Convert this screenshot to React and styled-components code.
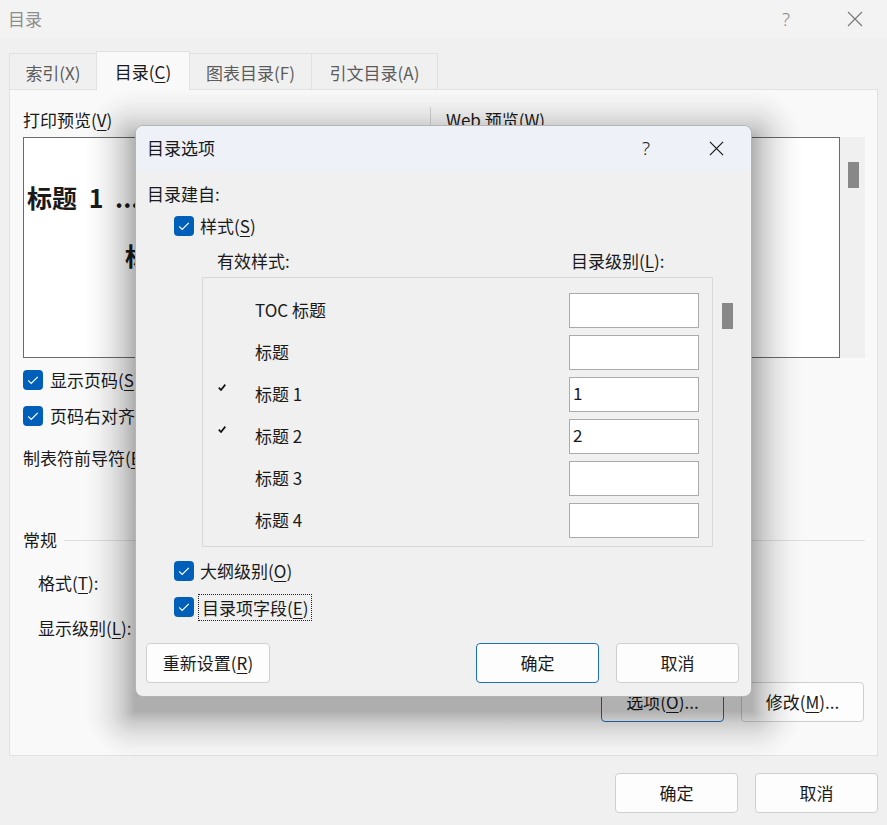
import React from "react";
import styled, { createGlobalStyle } from "styled-components";

const GlobalStyle = createGlobalStyle`
  html, body { margin: 0; padding: 0; }
  body {
    font-family: "Noto Sans CJK SC", "Microsoft YaHei", "Noto Sans", sans-serif;
    font-size: 17px;
    color: #1a1a1a;
    background: #f0f0f0;
  }
  * { box-sizing: border-box; }
`;

const Window = styled.div`
  position: relative;
  width: 887px;
  height: 825px;
  overflow: hidden;
  background: #f0f0f0;
  display: flex;
  flex-direction: column;
`;

const TitleBar = styled.div`
  flex: none;
  display: flex;
  align-items: center;
  background: ${(p) => p.$bg || "#f3f3f3"};
  padding-left: ${(p) => p.$pad || 8}px;
  height: ${(p) => p.$h || 38}px;
`;

const TitleText = styled.span`
  line-height: 24px;
  color: ${(p) => p.$color || "#1a1a1a"};
`;

const Captions = styled.div`
  margin-left: auto;
  display: flex;
  height: 100%;
`;

const CaptionBtn = styled.div`
  width: ${(p) => p.$w}px;
  height: 100%;
  display: flex;
  align-items: center;
  justify-content: center;
  color: ${(p) => p.$color};
  font-family: "Noto Sans", "DejaVu Sans", sans-serif;
  font-size: 19px;
  font-weight: 300;
`;

const Body = styled.div`
  flex: 1;
  display: flex;
  flex-direction: column;
  padding: 13px 9px 0;
`;

const TabStrip = styled.div`
  height: 38px;
  display: flex;
  align-items: flex-end;
`;

const Tab = styled.div`
  position: relative;
  width: ${(p) => p.$w}px;
  height: ${(p) => (p.$active ? 39 : 36)}px;
  margin-bottom: ${(p) => (p.$active ? -1 : 0)}px;
  margin-left: ${(p) => (p.$first ? 0 : -1)}px;
  z-index: ${(p) => (p.$active ? 2 : 1)};
  display: flex;
  align-items: center;
  justify-content: center;
  padding-top: ${(p) => (p.$active ? 1 : 3)}px;
  border: 1px solid #e1e1e1;
  border-bottom: none;
  background: ${(p) => (p.$active ? "#f9f9f9" : "#f0f0f0")};
  color: ${(p) => (p.$active ? "#1a1a1a" : "#5c5c5c")};
  line-height: 24px;
`;

const Pane = styled.div`
  height: 667px;
  flex: none;
  border: 1px solid #e1e1e1;
  background: #f9f9f9;
  padding: 18px 12px 0 13px;
  display: flex;
  flex-direction: column;
`;

const Key = styled.span`
  text-decoration: underline;
  text-underline-offset: 3px;
  text-decoration-thickness: 1px;
`;

const Line = styled.div`
  height: 24px;
  line-height: 24px;
  display: flex;
  align-items: center;
  margin-top: ${(p) => p.$mt || 0}px;
  margin-left: ${(p) => p.$ml || 0}px;
  gap: ${(p) => (p.$gap == null ? 7 : p.$gap)}px;
  white-space: nowrap;
`;

const PreviewRow = styled.div`
  display: flex;
  height: 250px;
`;

const PreviewGroup = styled.div`
  display: flex;
  flex-direction: column;
  width: ${(p) => (p.$w ? p.$w + "px" : "auto")};
  flex: ${(p) => (p.$w ? "none" : 1)};
`;

const PreviewLabel = styled.div`
  height: 24px;
  line-height: 24px;
  margin-bottom: 5px;
  white-space: nowrap;
`;

const PrintBox = styled.div`
  height: 221px;
  background: #fff;
  border: 1px solid #6b6b6b;
  overflow: hidden;
  padding: 44px 0 0 3px;
  font-weight: bold;
  font-size: 25px;
`;

const PreviewHeading = styled.div`
  line-height: 30px;
  white-space: nowrap;
  margin-left: ${(p) => p.$indent || 0}px;
  margin-top: ${(p) => p.$mt || 0}px;
  word-spacing: 6px;
`;

const Separator = styled.div`
  width: 1px;
  height: 252px;
  margin: -1px 15px 0 16px;
  background: #d6d6d6;
`;

const WebBoxRow = styled.div`
  display: flex;
  height: 221px;
`;

const WebBox = styled.div`
  flex: 1;
  background: #fff;
  border: 1px solid #6b6b6b;
`;

const ScrollTrack = styled.div`
  width: ${(p) => p.$w}px;
  background: ${(p) => p.$bg || "transparent"};
  padding: ${(p) => p.$top}px 0 0 ${(p) => p.$left}px;
`;

const Thumb = styled.div`
  width: 11px;
  height: 26px;
  background: #888;
`;

const GroupHeader = styled.div`
  display: flex;
  align-items: center;
  height: 24px;
  line-height: 24px;
  margin-top: ${(p) => p.$mt}px;
  gap: 7px;
  &::after {
    content: "";
    flex: 1;
    height: 1px;
    background: #dedede;
  }
`;

const ButtonRow = styled.div`
  display: flex;
  justify-content: ${(p) => p.$justify || "flex-end"};
  gap: 17px;
  margin-top: ${(p) => p.$mt || 0}px;
  margin-right: ${(p) => p.$mr || 0}px;
  margin-left: ${(p) => p.$ml || 0}px;
`;

const Spacer = styled.div`
  flex: 1;
`;

const Button = styled.div`
  width: ${(p) => p.$w || 123}px;
  height: 40px;
  display: flex;
  align-items: center;
  justify-content: center;
  background: #fdfdfd;
  border: 1px solid ${(p) => (p.$primary ? "#1f6fc0" : "#cfcfcf")};
  border-radius: 4px;
  line-height: 24px;
  white-space: nowrap;
`;

const BoxCheck = styled.span`
  width: 20px;
  height: 20px;
  flex: none;
  border-radius: 4px;
  background: #005fb8;
  display: flex;
  align-items: center;
  justify-content: center;
`;

/* ---- soft drop shadow drawn with gradients behind the modal ---- */
const S = 50; // shadow spread
const A = 0.3; // strength at the dialog edge
const ramp = () =>
  `rgba(0,0,0,${A}) 0%, rgba(0,0,0,${(A * 0.62).toFixed(3)}) 22%, rgba(0,0,0,${(A * 0.3).toFixed(3)}) 48%, rgba(0,0,0,${(A * 0.1).toFixed(3)}) 74%, rgba(0,0,0,0) 100%`;

const DialogShadow = styled.div`
  position: absolute;
  left: ${135 - S}px;
  top: ${125 - S + 14}px;
  width: ${617 + 2 * S}px;
  height: ${572 + 2 * S}px;
  z-index: 9;
  pointer-events: none;
  background:
    linear-gradient(to left, ${ramp()}) 0 ${S}px / ${S}px calc(100% - ${2 * S}px) no-repeat,
    linear-gradient(to right, ${ramp()}) 100% ${S}px / ${S}px calc(100% - ${2 * S}px) no-repeat,
    linear-gradient(to top, ${ramp()}) ${S}px 0 / calc(100% - ${2 * S}px) ${S}px no-repeat,
    linear-gradient(to bottom, ${ramp()}) ${S}px 100% / calc(100% - ${2 * S}px) ${S}px no-repeat,
    radial-gradient(circle ${S}px at 100% 100%, ${ramp()}) 0 0 / ${S}px ${S}px no-repeat,
    radial-gradient(circle ${S}px at 0 100%, ${ramp()}) 100% 0 / ${S}px ${S}px no-repeat,
    radial-gradient(circle ${S}px at 100% 0, ${ramp()}) 0 100% / ${S}px ${S}px no-repeat,
    radial-gradient(circle ${S}px at 0 0, ${ramp()}) 100% 100% / ${S}px ${S}px no-repeat,
    linear-gradient(rgba(0,0,0,${A}), rgba(0,0,0,${A})) ${S}px ${S}px / calc(100% - ${2 * S}px) calc(100% - ${2 * S}px) no-repeat;
`;

const Dialog = styled.div`
  position: absolute;
  left: 135px;
  top: 125px;
  width: 617px;
  height: 572px;
  z-index: 10;
  border: 1px solid #b4b4b4;
  border-radius: 8px;
  background: #f0f0f0;
  overflow: hidden;
  display: flex;
  flex-direction: column;
`;

const DialogBody = styled.div`
  display: flex;
  flex-direction: column;
  padding: 12px 12px 0 11px;
`;

const ListHeader = styled.div`
  display: grid;
  grid-template-columns: 354px 1fr;
  margin-top: 11px;
  padding-left: 70px;
  height: 24px;
  line-height: 24px;
`;

const ListWrap = styled.div`
  display: flex;
  margin-top: 4px;
  margin-left: 55px;
`;

const ListBox = styled.div`
  width: 512px;
  height: 270px;
  border: 1px solid #d9d9d9;
  padding-top: 11px;
  display: flex;
  flex-direction: column;
  overflow: hidden;
`;

const StyleRow = styled.div`
  height: 42px;
  flex: none;
  display: grid;
  grid-template-columns: 52px 1fr 130px;
  align-items: center;
  padding-right: 13px;
`;

const TickCell = styled.div`
  align-self: start;
  margin: 11px 0 0 15px;
  height: 7px;
  display: flex;
`;

const StyleName = styled.div`
  line-height: 24px;
  white-space: nowrap;
`;

const LevelInput = styled.div`
  height: 35px;
  background: #fff;
  border: 1px solid #ababab;
  padding: 0 0 0 3px;
  line-height: 30px;
`;

const FocusText = styled.span`
  margin-left: -2px;
  padding: 1px 2px 1px 3px;
  border: 1px dotted #222;
  line-height: 23px;
`;

const XIcon = ({ size = 16, color = "#1a1a1a", w = 1.2 }) => (
  <svg width={size} height={size} viewBox="0 0 16 16">
    <path d="M1 1 L15 15 M15 1 L1 15" stroke={color} strokeWidth={w} fill="none" />
  </svg>
);

const Check = () => (
  <BoxCheck>
    <svg width="20" height="20" viewBox="0 0 20 20">
      <path d="M5.2 10.4 L8.2 13.4 L14.8 6.9" stroke="#fff" strokeWidth="1.25" fill="none" />
    </svg>
  </BoxCheck>
);

const Tick = () => (
  <svg width="8" height="7" viewBox="0 0 8 7">
    <path d="M0.8 3.6 L3 6 L7.3 0.6" stroke="#111" strokeWidth="1.7" fill="none" />
  </svg>
);

const tabs = [
  { label: "索引(X)", w: 88 },
  { label: <>目录(<Key>C</Key>)</>, w: 94, active: true },
  { label: "图表目录(F)", w: 123 },
  { label: "引文目录(A)", w: 127 },
];

const styles = [
  { name: "TOC 标题", level: "" },
  { name: "标题", level: "" },
  { name: "标题 1", level: "1", tick: true },
  { name: "标题 2", level: "2", tick: true },
  { name: "标题 3", level: "" },
  { name: "标题 4", level: "" },
];

export default function App() {
  return (
    <>
      <GlobalStyle />
      <Window>
        <TitleBar>
          <TitleText $color="#8e8e8e">目录</TitleText>
          <Captions>
            <CaptionBtn $w={74} $color="#8a8a8a">?</CaptionBtn>
            <CaptionBtn $w={64} $color="#777">
              <XIcon color="#7a7a7a" />
            </CaptionBtn>
          </Captions>
        </TitleBar>
        <Body>
          <TabStrip>
            {tabs.map((t, i) => (
              <Tab key={i} $w={t.w} $active={t.active} $first={i === 0}>
                <span>{t.label}</span>
              </Tab>
            ))}
          </TabStrip>
          <Pane>
            <PreviewRow>
              <PreviewGroup $w={391}>
                <PreviewLabel>打印预览(<Key>V</Key>)</PreviewLabel>
                <PrintBox>
                  <PreviewHeading>标题 1 ...</PreviewHeading>
                  <PreviewHeading $indent={98} $mt={28}>标题 2</PreviewHeading>
                </PrintBox>
              </PreviewGroup>
              <Separator />
              <PreviewGroup>
                <PreviewLabel>Web 预览(<Key>W</Key>)</PreviewLabel>
                <WebBoxRow>
                  <WebBox />
                  <ScrollTrack $w={25} $bg="#f0f0f0" $top={25} $left={8}>
                    <Thumb />
                  </ScrollTrack>
                </WebBoxRow>
              </PreviewGroup>
            </PreviewRow>
            <Line $mt={10}>
              <Check />
              <span>显示页码(<Key>S</Key>)</span>
            </Line>
            <Line $mt={12}>
              <Check />
              <span>页码右对齐(<Key>R</Key>)</span>
            </Line>
            <Line $mt={18}>
              <span>制表符前导符(<Key>B</Key>):</span>
            </Line>
            <GroupHeader $mt={58}>常规</GroupHeader>
            <Line $mt={19} $ml={15}>
              <span>格式(<Key>T</Key>):</span>
            </Line>
            <Line $mt={21} $ml={15}>
              <span>显示级别(<Key>L</Key>):</span>
            </Line>
            <ButtonRow $mt={42} $mr={1}>
              <Button $primary>
                <span>选项(<Key>O</Key>)...</span>
              </Button>
              <Button>
                <span>修改(<Key>M</Key>)...</span>
              </Button>
            </ButtonRow>
          </Pane>
          <ButtonRow $mt={17}>
            <Button>确定</Button>
            <Button>取消</Button>
          </ButtonRow>
        </Body>

        <DialogShadow />
        <Dialog>
          <TitleBar $bg="#eef2f8" $pad={11} $h={44}>
            <TitleText>目录选项</TitleText>
            <Captions>
              <CaptionBtn $w={70} $color="#1a1a1a">?</CaptionBtn>
              <CaptionBtn $w={70} $color="#1a1a1a">
                <XIcon size={15} w={1.3} />
              </CaptionBtn>
            </Captions>
          </TitleBar>
          <DialogBody>
            <Line>
              <span>目录建自:</span>
            </Line>
            <Line $mt={8} $ml={27} $gap={6}>
              <Check />
              <span>样式(<Key>S</Key>)</span>
            </Line>
            <ListHeader>
              <span>有效样式:</span>
              <span>目录级别(<Key>L</Key>):</span>
            </ListHeader>
            <ListWrap>
              <ListBox>
                {styles.map((s, i) => (
                  <StyleRow key={i}>
                    <TickCell>{s.tick ? <Tick /> : null}</TickCell>
                    <StyleName>{s.name}</StyleName>
                    <LevelInput>{s.level}</LevelInput>
                  </StyleRow>
                ))}
              </ListBox>
              <ScrollTrack $w={26} $top={26} $left={9}>
                <Thumb />
              </ScrollTrack>
            </ListWrap>
            <Line $mt={12} $ml={27} $gap={6}>
              <Check />
              <span>大纲级别(<Key>O</Key>)</span>
            </Line>
            <Line $mt={12} $ml={27} $gap={6}>
              <Check />
              <FocusText>目录项字段(<Key>E</Key>)</FocusText>
            </Line>
            <ButtonRow $mt={24} $ml={-1} $justify="flex-start">
              <Button $w={124}>
                <span>重新设置(<Key>R</Key>)</span>
              </Button>
              <Spacer />
              <Button $primary>确定</Button>
              <Button>取消</Button>
            </ButtonRow>
          </DialogBody>
        </Dialog>
      </Window>
    </>
  );
}
